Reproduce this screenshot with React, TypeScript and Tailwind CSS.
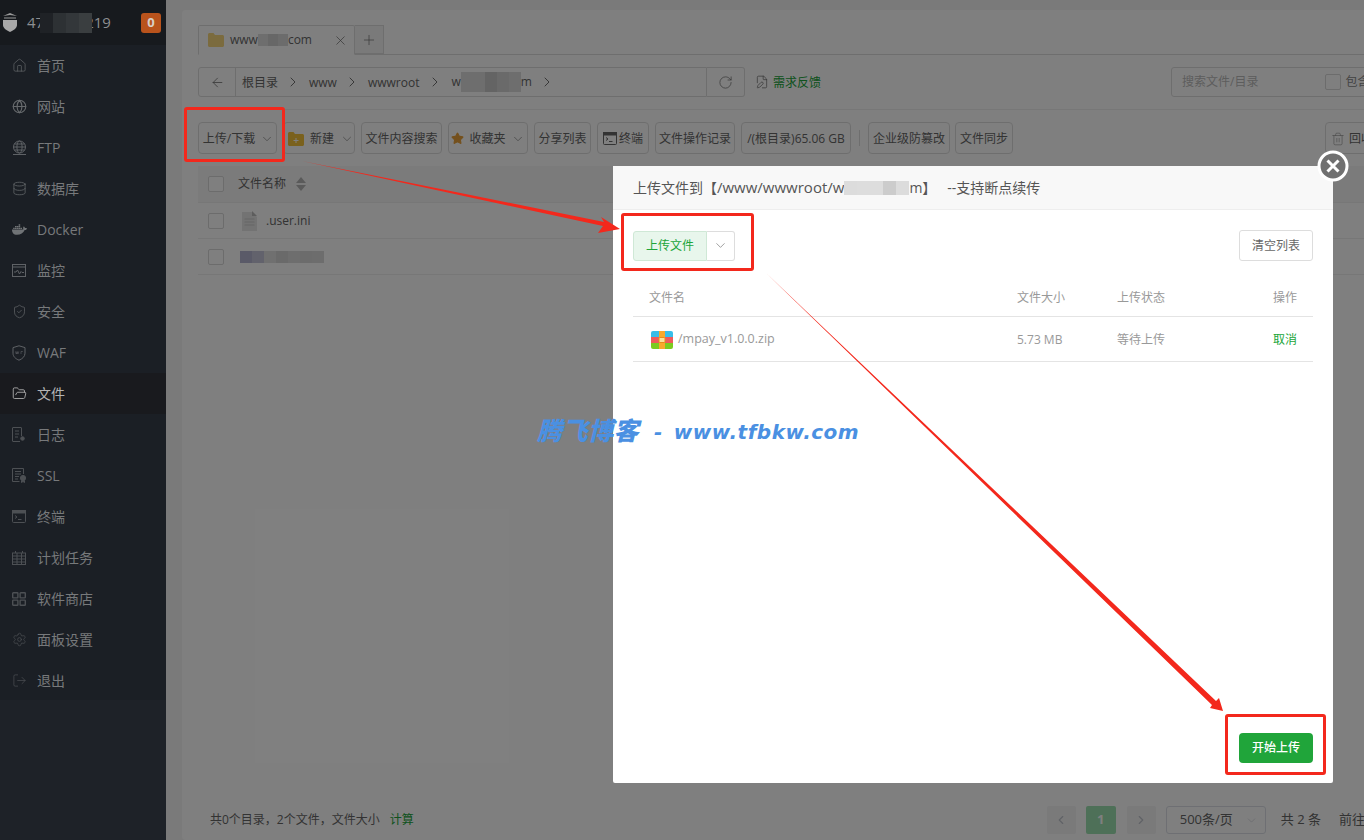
import React from "react";
import { FaDocker } from "react-icons/fa";
import {
  House, Globe, Database, ShieldCheck, FolderOpen, Settings, LogOut, ChevronDown, ChevronRight, ChevronLeft, ArrowLeft,
  RotateCw, X, Plus, Star, Trash2, FilePen,
} from "lucide-react";

const Mosaic = ({ cells, h, w = "w-[12px]" }: { cells: string[]; h: string; w?: string }) => (
  <span className={`relative z-10 inline-flex ${h} align-middle`}>
    {cells.map((c, i) => (
      <span key={i} className={`${w} h-full ${c}`} />
    ))}
  </span>
);

const FtpIcon = () => (
  <svg width="15" height="16" viewBox="0 0 15 16" fill="none" stroke="#5f6266" strokeWidth="1">
    <circle cx="7.5" cy="7" r="6" />
    <ellipse cx="7.5" cy="7" rx="2.6" ry="6" />
    <path d="M1.5 7h12M2.4 4h10.2M2.4 10h10.2M1 14.5h13" />
  </svg>
);

const MonitorIcon = () => (
  <svg width="14" height="13" viewBox="0 0 14 13" fill="none" stroke="#5f6266" strokeWidth="1">
    <rect x="0.5" y="0.5" width="13" height="12" />
    <path d="M0.5 3h13" />
    <path d="M2 8l2 0 1.5-2 2 4 1.500-2.500 1 1 2 0" />
  </svg>
);

const WafIcon = () => (
  <svg width="14" height="16" viewBox="0 0 14 16" fill="none" stroke="#5f6266" strokeWidth="1">
    <path d="M7 .8l6 1.800v5.600c0 3.400-2.600 5.600-6 7-3.400-1.400-6-3.600-6-7V2.600z" />
    <path d="M3.500 6.500l.8 2.500.8-2.500.8 2.500.8-2.500M9 9V6.500h1.800" strokeWidth=".6" />
  </svg>
);

const LogIcon = () => (
  <svg width="13" height="15" viewBox="0 0 13 15" fill="none" stroke="#4d5054" strokeWidth="1">
    <path d="M9.500 9V1a.5.5 0 0 0-.5-.5H1a.5.5 0 0 0-.5.5v13a.5.5 0 0 0 .5.5h7" />
    <path d="M3 4h4M3 7h4M3 10h3" />
    <circle cx="10.500" cy="11.500" r="1.800" fill="#4d5054" />
  </svg>
);

const SslIcon = () => (
  <svg width="15" height="15" viewBox="0 0 15 15" fill="none" stroke="#4d5054" strokeWidth="1">
    <path d="M11.500 6V.5H.5v13h7" />
    <path d="M3 3.500h6M3 6h6M3 8.500h4M3 11h3" />
    <circle cx="11" cy="10" r="2.600" fill="#4d5054" />
    <path d="M9.500 12.500v2l1.500-1 1.500 1v-2" fill="#4d5054" />
  </svg>
);

const TermIcon = ({ c = "#4d5054" }: { c?: string }) => (
  <svg width="14" height="13" viewBox="0 0 14 13" fill="none" stroke={c} strokeWidth="1" className="shrink-0">
    <rect x="0.5" y="0.5" width="13" height="12" rx="1" />
    <rect x="0.5" y="0.5" width="13" height="2.500" fill={c} />
    <path d="M3 5.500l2 1.500-2 1.500M6 9.500h3.500" />
  </svg>
);

const PlanIcon = () => (
  <svg width="14" height="14" viewBox="0 0 14 14" fill="none" stroke="#4d5054" strokeWidth="1">
    <rect x="0.5" y="2" width="13" height="11.500" />
    <path d="M.5 5h13M.5 8h13M.5 11h13M5 2v11.500M9.500 2v11.500M3.500 0v2M10.500 0v2" />
  </svg>
);

const StoreIcon = () => (
  <svg width="14" height="14" viewBox="0 0 14 14" fill="none" stroke="#4d5054" strokeWidth="1.400">
    <rect x="0.700" y="0.700" width="5.200" height="5.200" rx="0.600" />
    <rect x="8.100" y="0.700" width="5.200" height="5.200" rx="0.600" />
    <rect x="0.700" y="8.100" width="5.200" height="5.200" rx="0.600" />
    <rect x="8.100" y="8.100" width="5.200" height="5.200" rx="0.600" />
  </svg>
);

const menu = [
  { t: "首页", i: <House size={15} strokeWidth={1.1} color="#66696c" /> },
  { t: "网站", i: <Globe size={15} strokeWidth={1.8} color="#66696c" /> },
  { t: "FTP", i: <FtpIcon /> },
  { t: "数据库", i: <Database size={15} strokeWidth={1.2} color="#66696c" /> },
  { t: "Docker", i: <FaDocker size={15} color="#707376" /> },
  { t: "监控", i: <MonitorIcon /> },
  { t: "安全", i: <ShieldCheck size={15} strokeWidth={1.1} color="#66696c" /> },
  { t: "WAF", i: <WafIcon /> },
  { t: "文件", i: <FolderOpen size={15} strokeWidth={1.4} color="#b0b0b0" />, active: true },
  { t: "日志", i: <LogIcon /> },
  { t: "SSL", i: <SslIcon /> },
  { t: "终端", i: <TermIcon /> },
  { t: "计划任务", i: <PlanIcon /> },
  { t: "软件商店", i: <StoreIcon /> },
  { t: "面板设置", i: <Settings size={15} strokeWidth={1.1} color="#4d5054" /> },
  { t: "退出", i: <LogOut size={15} strokeWidth={1.1} color="#4d5054" /> },
];

const Sidebar = () => (
  <aside className="w-[166px] shrink-0 h-full bg-[#1b1f25] flex flex-col">
    <div className="h-[45px] bg-[#171a1e] flex items-center pl-[2px] pr-[5px]">
      <svg width="16" height="19" viewBox="0 0 16 19" className="shrink-0">
        <path d="M8 0L15 3 8 2 1 3z M2 4.500h12v1H2z" fill="#9a9a9a" />
        <path d="M1 7h14v5c0 3-3 5-7 7-4-2-7-4-7-7z" fill="#a8a8a8" />
      </svg>
      <span className="ml-[9px] text-[15px] leading-none text-[#8d8f91] flex items-center">
        <span>47</span>
        <span className="-ml-[4px] relative z-10 flex">
          <Mosaic h="h-[20px]" w="w-[13px]" cells={["bg-[#1f2226]", "bg-[#2d3134]", "bg-[#33373a]", "bg-[#3a3e40]"]} />
        </span>
        <span className="-ml-[7px]">219</span>
      </span>
      <span className="ml-auto w-[20px] h-[20px] rounded-[3px] bg-[#b9531c] text-[#d8d0c8] text-[13px] font-bold flex items-center justify-center">0</span>
    </div>
    <nav className="flex flex-col">
      {menu.map((m) => (
        <div key={m.t} className={`h-[41px] flex items-center pl-[12px] text-[14px] ${m.active ? "bg-[#191a1e] text-[#b4b4b4]" : "text-[#77797b]"}`}>
          <span className="w-[25px] flex items-center">{m.i}</span>
          {m.t}
        </div>
      ))}
    </nav>
    <div className="flex-1 mt-[-1px] bg-[#1e2228]" />
  </aside>
);

const Btn = ({ children, w, cls = "" }: { children: React.ReactNode; w: string; cls?: string }) => (
  <div className={`h-[32px] ${w} shrink-0 border border-[#dddddd] rounded-[4px] flex items-center justify-center pt-[1px] text-[12px] text-[#666666] whitespace-nowrap ${cls}`}>
    {children}
  </div>
);

const Folder = ({ plus }: { plus?: boolean }) => (
  <svg width="16" height="14" viewBox="0 0 16 14" className="shrink-0">
    <path d="M0 1.500C0 .7.7 0 1.500 0h4l1.500 2h7.500c.8 0 1.500.7 1.500 1.500V12.500c0 .8-.7 1.500-1.500 1.500h-13C.7 14 0 13.300 0 12.500z" fill={plus ? "#f5c33b" : "#f6d77c"} />
    {plus && <path d="M8 6v5M5.500 8.500h5" stroke="#fff" strokeWidth="1" />}
  </svg>
);

const Checkbox = () => <span className="w-[16px] h-[16px] border border-[#d8d8d8] rounded-[2px] bg-white shrink-0" />;

const Chev = () => <ChevronRight size={16} strokeWidth={1.4} color="#666666" className="shrink-0" />;

const Main = () => (
  <main className="relative isolate flex-1 h-full bg-[#f5f5f5] overflow-hidden pl-[16px] pt-[10px]">
    <div className="w-[1300px] h-[830px] bg-white rounded-[4px] pl-[16px] pb-[6px] pt-[15px] flex flex-col">
      {/* tabs */}
      <div className="h-[30px] flex border-b border-[#dddddd] shrink-0">
        <div className="w-[157px] h-[30px] border border-[#dddddd] border-b-white bg-white rounded-t-[2px] flex items-center pl-[9px] text-[12px] text-[#666666]">
          <Folder />
          <span className="ml-[6px] flex items-center">
            www<Mosaic h="h-[12px]" w="w-[10px]" cells={["bg-[#dcdcdc]", "bg-[#cfcfcf]", "bg-[#d8d8d8]"]} />com
          </span>
          <X size={15} strokeWidth={1.1} color="#666666" className="ml-auto mr-[6px]" />
        </div>
        <div className="w-[29px] h-[29px] border border-l-0 border-[#dddddd] bg-[#f5f5f5] flex items-center justify-center">
          <Plus size={16} strokeWidth={1} color="#666666" />
        </div>
      </div>
      {/* path bar */}
      <div className="mt-[12px] h-[30px] flex items-center shrink-0">
        <div className="w-[509px] h-[30px] border border-[#dddddd] rounded-l-[3px] flex items-center text-[12px] text-[#666666]">
          <span className="w-[37px] h-full border-r border-[#dddddd] flex items-center justify-center">
            <ArrowLeft size={15} strokeWidth={1.2} color="#666666" />
          </span>
          <span className="ml-[6px] pt-[1px]">根目录</span>
          <span className="ml-[7px] mr-[8px]"><Chev /></span>
          <span className="pt-[1px]">www</span>
          <span className="ml-[7px] mr-[8px]"><Chev /></span>
          <span className="pt-[1px]">wwwroot</span>
          <span className="ml-[8px] mr-[8px]"><Chev /></span>
          <span className="flex items-center">
            w
            <Mosaic h="h-[20px]" cells={["bg-[#dddddd]", "bg-[#dcdcdc]", "bg-[#c8c8c8]", "bg-[#d4d4d4]", "bg-[#dddddd]"]} />
            m
          </span>
          <span className="ml-[7px]"><Chev /></span>
        </div>
        <div className="w-[38px] h-[30px] border border-l-0 border-[#dddddd] rounded-r-[3px] flex items-center justify-center">
          <RotateCw size={15} strokeWidth={1.1} color="#666666" />
        </div>
        <FilePen size={14} strokeWidth={1.2} color="#666666" className="ml-[10px]" />
        <span className="ml-[4px] pt-[1px] text-[12px] text-[#20a53a]">需求反馈</span>
        <div className="ml-[350px] w-[300px] shrink-0 h-[30px] border border-[#dddddd] rounded-[3px] flex items-center pl-[10px] text-[12px] text-[#bbbbbb] whitespace-nowrap">
          搜索文件/目录
          <span className="ml-[67px] flex"><Checkbox /></span>
          <span className="ml-[4px] text-[#888888]">包含子目录</span>
        </div>
      </div>
      <div className="mt-[12px] border-b border-[#eeeeee] shrink-0" />
      {/* toolbar */}
      <div className="mt-[12px] flex items-center gap-[6px] shrink-0">
        <Btn w="w-[79px]" cls="gap-[5px] pl-[2px]">上传/下载<ChevronDown size={14} strokeWidth={1} color="#666666" /></Btn>
        <Btn w="w-[72px]" cls="justify-start pl-[4px] gap-[6px]"><Folder plus /><span>新建</span><ChevronDown size={14} strokeWidth={1} color="#666666" /></Btn>
        <Btn w="w-[81px]">文件内容搜索</Btn>
        <Btn w="w-[80px]" cls="gap-[5px]"><Star size={13} fill="#e8a13a" color="#e8a13a" />收藏夹<ChevronDown size={14} strokeWidth={1} color="#666666" /></Btn>
        <Btn w="w-[57px]">分享列表</Btn>
        <Btn w="w-[52px]" cls="gap-[2px]"><TermIcon c="#666666" />终端</Btn>
        <Btn w="w-[80px]">文件操作记录</Btn>
        <Btn w="w-[110px]">/(根目录)65.06 GB</Btn>
        <span className="w-px h-[16px] bg-[#dddddd] mx-[2px]" />
        <Btn w="w-[82px]">企业级防篡改</Btn>
        <Btn w="w-[58px]" cls="-ml-[1px]">文件同步</Btn>
        <Btn w="w-[80px]" cls="ml-[306px] justify-start pl-[5px] gap-[4px]"><Trash2 size={14} strokeWidth={1} color="#888888" />回收站</Btn>
      </div>
      {/* table */}
      <div className="mt-[12px] shrink-0 text-[12px] text-[#666666]">
        <div className="h-[37px] bg-[#f6f6f6] border-b border-[#eeeeee] flex items-center pl-[10px]">
          <Checkbox />
          <span className="ml-[14px]">文件名称</span>
          <svg width="10" height="14" viewBox="0 0 10 14" className="ml-[10px]">
            <path d="M5 0l5 6H0zM5 14l5-6H0z" fill="#b5b5b5" />
          </svg>
        </div>
        <div className="h-[36px] border-b border-[#eeeeee] flex items-center pl-[10px] pt-[1px]">
          <Checkbox />
          <svg width="15" height="20" viewBox="0 0 15 20" className="ml-[18px]">
            <path d="M0 1h10l5 5v14H0z" fill="#e6e6e6" />
            <path d="M10 0l5 5h-5z" fill="#bbbbbb" />
            <path d="M2.500 8h10M2.500 11h10M2.500 14h10" stroke="#cccccc" />
          </svg>
          <span className="ml-[9px]">.user.ini</span>
        </div>
        <div className="h-[36px] border-b border-[#eeeeee] flex items-center pl-[10px] pt-[1px]">
          <Checkbox />
          <span className="ml-[16px] flex">
            <Mosaic h="h-[12px]" cells={["bg-[#b4b4d0]", "bg-[#c4c4d8]", "bg-[#e0e0e0]", "bg-[#d4d4d4]", "bg-[#dddddd]", "bg-[#d8d8d8]", "bg-[#dadada]"]} />
          </span>
        </div>
      </div>
      {/* footer */}
      <div className="mt-auto h-[28px] flex items-center pl-[12px] text-[12px] text-[#666666] shrink-0">
        共0个目录，2个文件，文件大小
        <span className="ml-[10px] text-[#20a53a]">计算</span>
        <span className="ml-[633px] w-[29px] h-[28px] bg-[#f4f4f5] rounded-[2px] flex items-center justify-center">
          <ChevronLeft size={14} color="#c0c4cc" />
        </span>
        <span className="ml-[10px] w-[30px] h-[28px] bg-[#9ce0b0] rounded-[2px] text-white text-[13px] font-bold flex items-center justify-center">1</span>
        <span className="ml-[11px] w-[29px] h-[28px] bg-[#f4f4f5] rounded-[2px] flex items-center justify-center">
          <ChevronRight size={14} color="#c0c4cc" />
        </span>
        <span className="ml-[10px] w-[100px] h-[28px] border border-[#dcdfe6] rounded-[3px] flex items-center pl-[13px] text-[13px]">
          500条/页
          <ChevronDown size={13} strokeWidth={1} color="#c0c4cc" className="ml-auto mr-[7px]" />
        </span>
        <span className="ml-[15px] text-[13px] whitespace-pre">共 2 条</span>
        <span className="ml-[18px] text-[13px]">前往</span>
      </div>
    </div>
    <div className="absolute inset-0 z-20 bg-black/50" />
  </main>
);

const Modal = () => (
  <div className="absolute isolate left-[613px] top-[166px] w-[720px] h-[617px] bg-white rounded-[2px] flex flex-col">
    <div className="h-[44px] shrink-0 bg-[#f8f8f8] border-b border-[#eeeeee] flex items-center pl-[20px] text-[14px] text-[#555555] whitespace-pre">
      上传文件到【<span className="text-[15px]">/www/wwwroot/w</span>
      <Mosaic h="h-[14px]" w="w-[13px]" cells={["bg-[#dcdcdc]", "bg-[#dddddd]", "bg-[#dddddd]", "bg-[#cccccc]", "bg-[#dcdcdc]"]} />
      m】   --支持断点续传
    </div>
    <div className="px-[20px] pt-[20px] flex-1 flex flex-col">
      <div className="flex items-center h-[31px]">
        <span className="w-[74px] h-[30px] bg-[#e8f6ec] border border-[#cfe8d6] rounded-l-[3px] flex items-center justify-center text-[12px] text-[#20a53a]">上传文件</span>
        <span className="w-[28px] h-[30px] border border-l-0 border-[#dddddd] rounded-r-[3px] flex items-center justify-center">
          <ChevronDown size={15} strokeWidth={1} color="#666666" />
        </span>
        <span className="ml-auto w-[74px] h-[31px] border border-[#dddddd] rounded-[3px] flex items-center justify-center text-[12px] text-[#666666]">清空列表</span>
      </div>
      <div className="mt-[25px] h-[31px] border-b border-[#e4e4e4] flex items-start pt-[3px] text-[12px] text-[#999999]">
        <span className="ml-[16px] w-[368px]">文件名</span>
        <span className="w-[100px]">文件大小</span>
        <span className="w-[156px]">上传状态</span>
        <span className="w-[24px]">操作</span>
      </div>
      <div className="h-[45px] border-b border-[#e4e4e4] flex items-center pt-[1px] text-[12px] text-[#999999]">
        <svg width="22" height="18" viewBox="0 0 22 18" className="ml-[18px] shrink-0">
          <defs>
            <clipPath id="zipclip"><rect width="22" height="18" rx="2" /></clipPath>
          </defs>
          <g clipPath="url(#zipclip)">
            <rect x="0" y="0" width="22" height="6" fill="#38bde8" />
            <rect x="0" y="6" width="22" height="6" fill="#ef5a5a" />
            <rect x="0" y="12" width="22" height="6" fill="#7ccb1f" />
            <rect x="8" y="0" width="6" height="18" fill="#f8a92c" />
            <rect x="8" y="6.500" width="6" height="5" rx="1" fill="#fbe29a" stroke="#e88e1a" strokeWidth="1" />
          </g>
        </svg>
        <span className="ml-[5px] w-[339px] text-[12.5px]">/mpay_v1.0.0.zip</span>
        <span className="w-[100px]">5.73 MB</span>
        <span className="w-[156px]">等待上传</span>
        <span className="w-[24px] text-[#20a53a]">取消</span>
      </div>
      <div className="mt-auto mb-[20px] self-end w-[74px] h-[30px] bg-[#20a53a] rounded-[4px] text-white text-[12px] font-medium flex items-center justify-center">开始上传</div>
    </div>
  </div>
);

export default function App() {
  return (
    <div
      className="relative w-[1364px] h-[840px] overflow-hidden flex"
      style={{ fontFamily: '"Open Sans","Noto Sans CJK SC",sans-serif' }}
    >
      <Sidebar />
      <Main />
      <Modal />
      {/* close button */}
      <svg width="32" height="32" viewBox="0 0 32 32" className="absolute left-[1317px] top-[150px]">
        <circle cx="16" cy="16" r="14" fill="#707070" stroke="#ffffff" strokeWidth="3" />
        <path d="M10.500 10.500l11 11M21.500 10.500l-11 11" stroke="#ffffff" strokeWidth="3" />
      </svg>
      {/* watermark */}
      <div
        className="absolute left-[537px] top-[418px] h-[28px] flex items-center font-bold italic text-[#4a90e2] whitespace-pre"
        style={{ fontFamily: '"DejaVu Sans","Noto Sans CJK SC",sans-serif' }}
      >
        <span className="text-[25px] font-black tracking-[0.5px]">腾飞博客</span>
        <span className="ml-[15px] text-[20px] tracking-[0.5px]">-</span>
        <span className="ml-[11px] text-[20px] tracking-[0.5px]">www.tfbkw.com</span>
      </div>
      {/* annotations */}
      <div className="absolute left-[184px] top-[107px] w-[101px] h-[55px] border-[3px] border-[#f3281c] rounded-[3px]" />
      <div className="absolute left-[621px] top-[213px] w-[133px] h-[58px] border-[3px] border-[#f3281c] rounded-[3px]" />
      <div className="absolute left-[1225px] top-[714px] w-[101px] h-[61px] border-[3px] border-[#f3281c] rounded-[3px]" />
      <svg className="absolute inset-0 w-full h-full pointer-events-none" viewBox="0 0 1364 840">
        <path d="M302 161 L604 222 L601 217 L620 229 L598 233 L603 226 Z" fill="#f3281c" />
        <path d="M765 272 L1216 701 L1219 698 L1223 711 L1210 708 L1212 705 Z" fill="#f3281c" />
      </svg>
    </div>
  );
}
